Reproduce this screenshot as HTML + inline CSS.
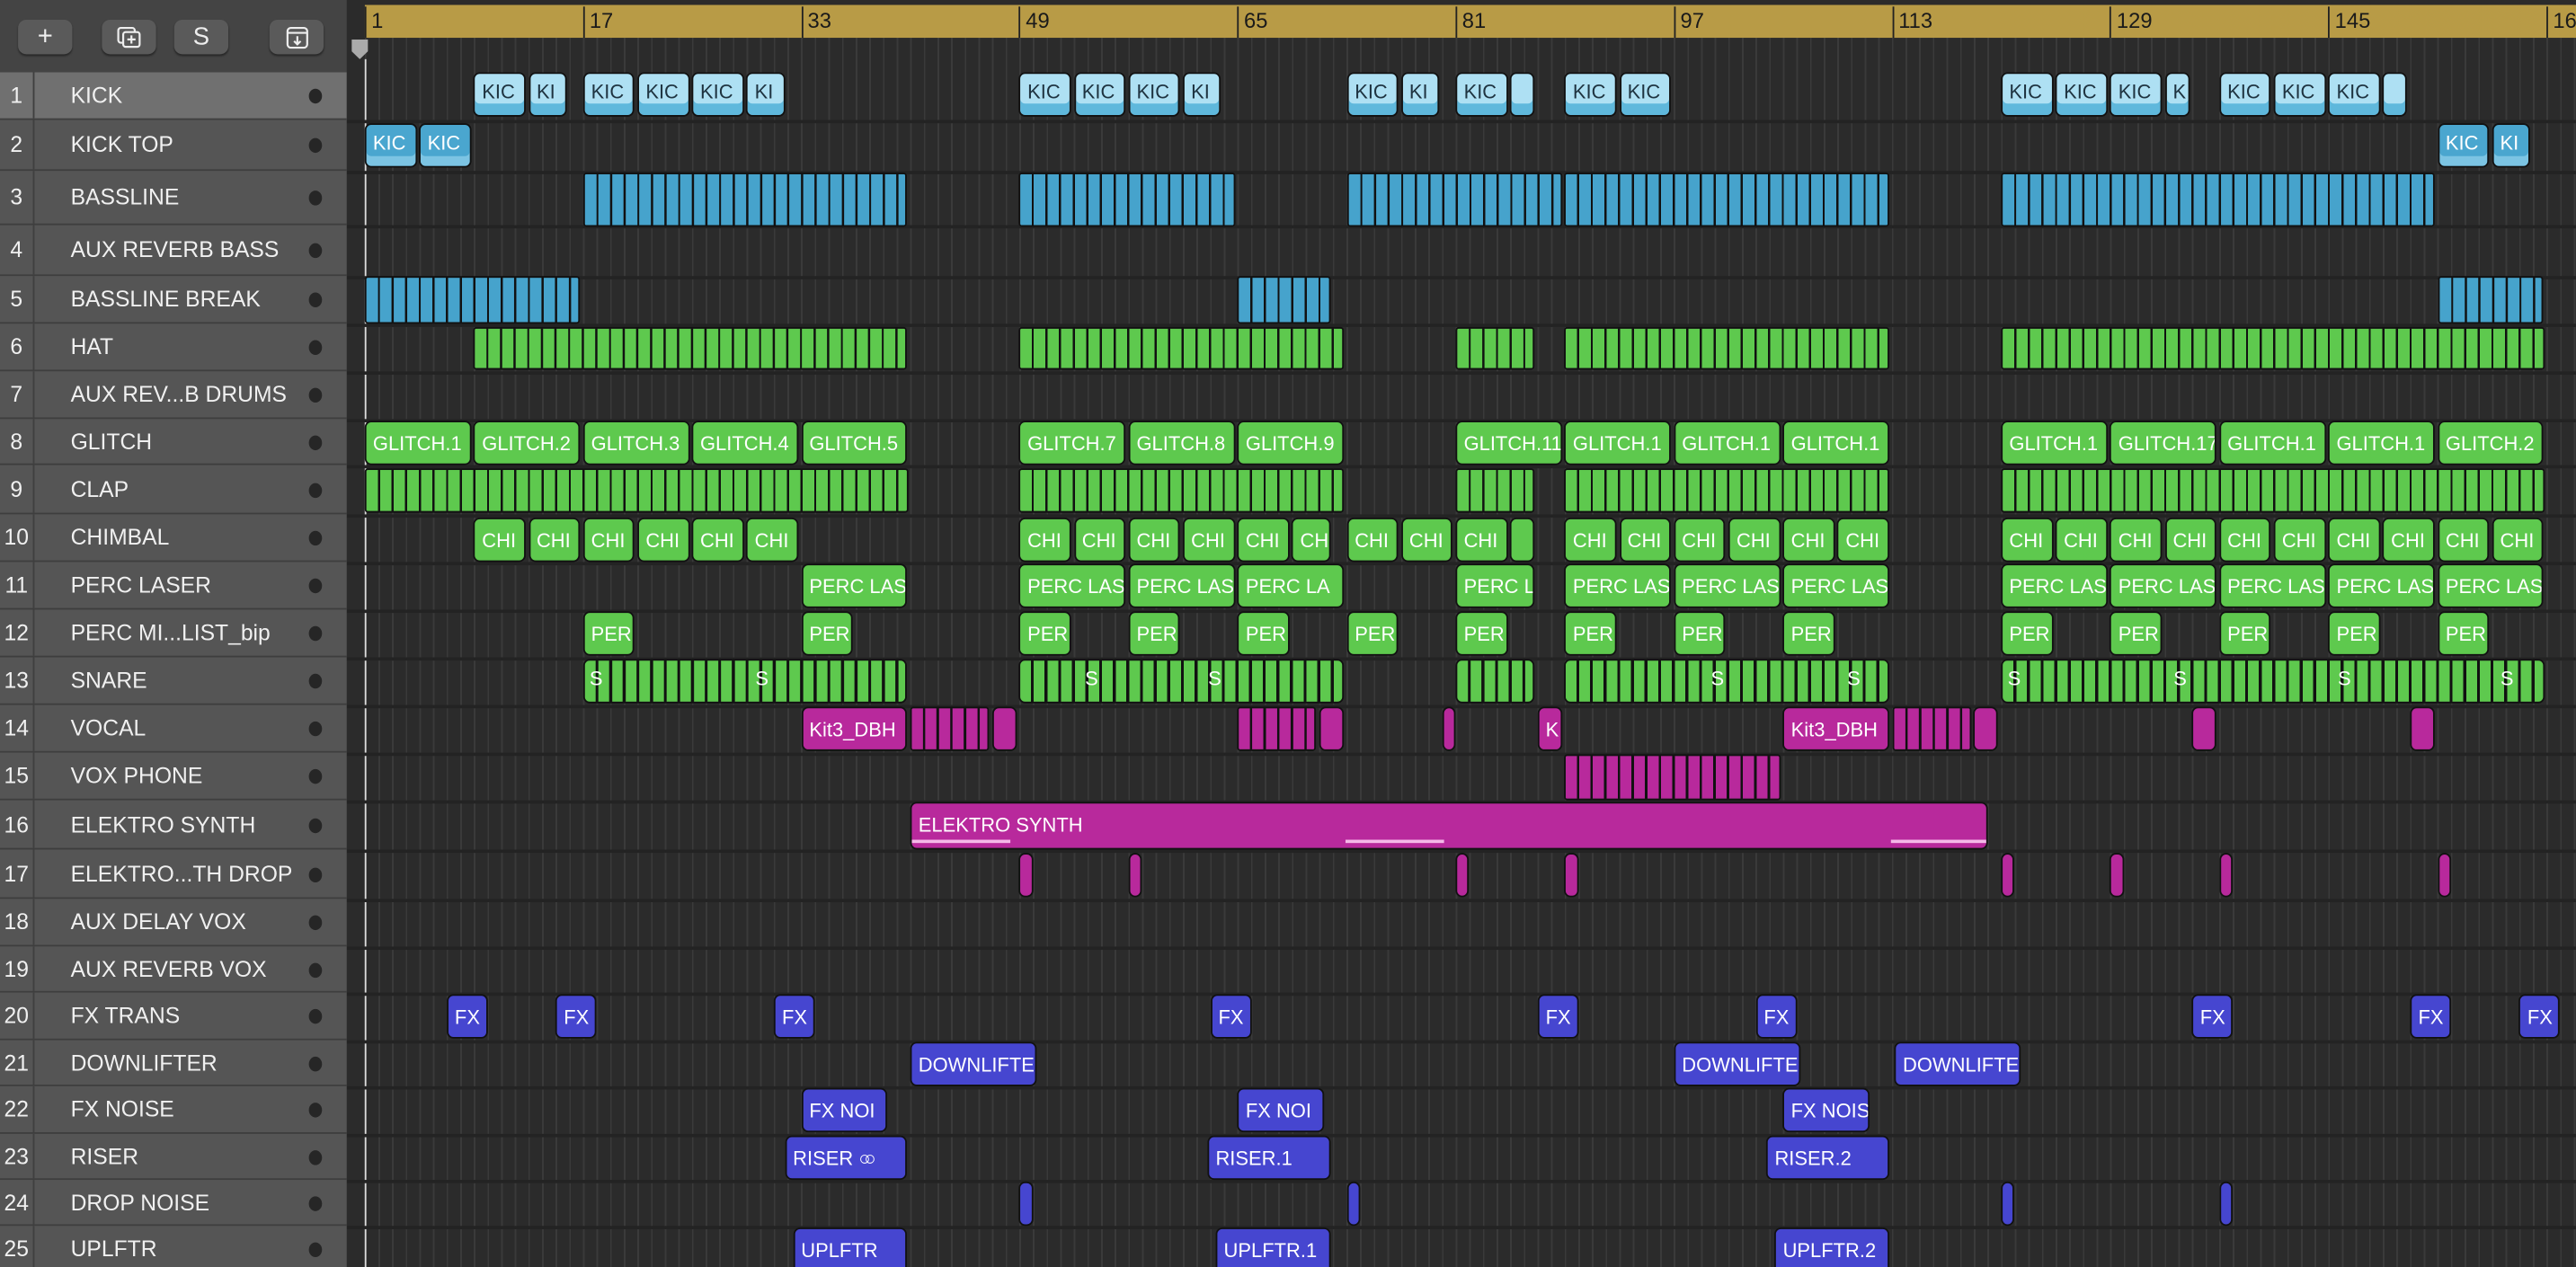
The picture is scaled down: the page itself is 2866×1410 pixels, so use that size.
<!DOCTYPE html>
<html><head><meta charset="utf-8"><style>
html,body{margin:0;padding:0;background:#2b2b2b;overflow:hidden;width:2866px;height:1410px}
#w{position:absolute;left:0;top:0;width:1568px;height:771px;transform:scale(1.82781,1.82879);transform-origin:0 0;font-family:"Liberation Sans",sans-serif;background:#2b2b2b;overflow:hidden}
.lp{position:absolute;left:0;top:0;width:211px;height:771px;background:#4a4a4a}
.hdr{position:absolute;left:0;top:0;width:211px;height:44px;background:#444}
.btn{position:absolute;top:12px;height:21px;width:33px;background:#5a5a5a;border-radius:5px;color:#eee;text-align:center;font-size:16px;line-height:21px;box-shadow:0 1px 1px #2a2a2a}
.tr{position:absolute;left:0;width:211px;background:#555;border-bottom:1px solid #3e3e3e;box-sizing:border-box;color:#f0f0f0;font-size:13.5px}
.tr.sel{background:#707070}
.tr .n{position:absolute;left:0;width:20px;text-align:center;top:50%;transform:translateY(-50%)}
.tr .nm{position:absolute;left:43px;top:50%;transform:translateY(-50%);white-space:nowrap}
.tr .d{position:absolute;left:188px;top:50%;margin-top:-4px;width:8px;height:9px;border-radius:50%;background:#262626}
.tr .sp{position:absolute;left:20px;top:0;bottom:0;width:1px;background:#3f3f3f}
.grid{position:absolute;left:222px;top:22px;width:1346px;height:760px;background:repeating-linear-gradient(90deg,#3a3a3a 0 1px,transparent 1px 8.3px)}
.rl{position:absolute;left:0;width:1568px;height:2px;background:#232323}
.ruler{position:absolute;left:222px;top:3px;width:1346px;height:20px;background:#b89b46}
.ruler span{position:absolute;top:1px;font-size:13px;color:#1a1a1a;padding-left:3px;border-left:1px solid #222;height:19px;line-height:17px}
.rg{position:absolute;left:211px;top:0;width:11px;height:771px;background:#2b2b2b}
.c{position:absolute;left:calc(222px + (var(--b) - 1)*8.3px);width:calc(var(--l)*8.3px - 1.5px);box-sizing:border-box;border:1px solid #111;border-radius:4px;color:#fff;font-size:12px;padding:6px 0 0 4px;white-space:nowrap;overflow:hidden}
.lb{background:#aee0f3;color:#1e3340;box-shadow:inset 0 -7px 0 #5fb8dc;padding-top:4px}
.mb{background:#4aa6cf;box-shadow:inset 0 -6px 0 #7cc4e3;padding-top:4px}
.g{background:#5ec94e}
.m{background:#b8299c}
.p{background:#4646d0}
.s{border-radius:2px;padding:0}
.sb{background:repeating-linear-gradient(90deg,#46a3cc 0 7px,#111 7px 8.3px)}
.sg{background:repeating-linear-gradient(90deg,#5ec94e 0 7px,#111 7px 8.3px)}
.sm{background:repeating-linear-gradient(90deg,#b8299c 0 6.8px,#111 6.8px 8.3px)}
.sn{background:repeating-linear-gradient(90deg,#5ec94e 0 6.5px,#111 6.5px 8.3px);border-radius:4px}
</style></head><body><div id="w">
<div class="grid"></div>
<div class="ruler">
<span style="left:0">1</span><span style="left:132.8px">17</span><span style="left:265.6px">33</span><span style="left:398.4px">49</span><span style="left:531.2px">65</span><span style="left:664px">81</span><span style="left:796.8px">97</span><span style="left:929.6px">113</span><span style="left:1062.4px">129</span><span style="left:1195.2px">145</span><span style="left:1328px">16</span>
</div>
<div class="rg"><div style="position:absolute;left:3px;top:24px;width:10px;height:12px;background:#aaa;clip-path:polygon(0 0,100% 0,100% 60%,50% 100%,0 60%)"></div></div>
<div style="position:absolute;left:222px;top:36px;width:1px;height:740px;background:#ddd"></div>

<div class="rl" style="top:73px"></div><div class="rl" style="top:104px"></div><div class="rl" style="top:137px"></div><div class="rl" style="top:168px"></div><div class="rl" style="top:197px"></div><div class="rl" style="top:226px"></div><div class="rl" style="top:255px"></div><div class="rl" style="top:283px"></div><div class="rl" style="top:313px"></div><div class="rl" style="top:342px"></div><div class="rl" style="top:371px"></div><div class="rl" style="top:400px"></div><div class="rl" style="top:429px"></div><div class="rl" style="top:458px"></div><div class="rl" style="top:487px"></div><div class="rl" style="top:517px"></div><div class="rl" style="top:547px"></div><div class="rl" style="top:576px"></div><div class="rl" style="top:604px"></div><div class="rl" style="top:633px"></div><div class="rl" style="top:661px"></div><div class="rl" style="top:690px"></div><div class="rl" style="top:718px"></div><div class="rl" style="top:746px"></div>

<div class="lp">
<div class="hdr">
<div class="btn" style="left:11px">+</div>
<div class="btn" style="left:62px"><svg width="16" height="14" viewBox="0 0 16 14" style="margin-top:4px"><rect x="1" y="1" width="10" height="9" rx="1.5" fill="none" stroke="#eee" stroke-width="1.2"/><rect x="4" y="3.5" width="10" height="9" rx="1.5" fill="#5a5a5a" stroke="#eee" stroke-width="1.2"/><path d="M9 5.5v5M6.5 8h5" stroke="#eee" stroke-width="1.2"/></svg></div>
<div class="btn" style="left:106px;font-size:15px">S</div>
<div class="btn" style="left:164px"><svg width="14" height="14" viewBox="0 0 14 14" style="margin-top:4px"><rect x="1" y="1" width="12" height="12" rx="2" fill="none" stroke="#eee" stroke-width="1.2"/><path d="M1 4h12M7 6v5M5 9l2 2 2-2" fill="none" stroke="#eee" stroke-width="1.2"/></svg></div>
</div>
<div class="tr sel" style="top:44px;height:29px"><div class="sp"></div><div class="n">1</div><div class="nm">KICK</div><div class="d"></div></div>
<div class="tr" style="top:73px;height:31px"><div class="sp"></div><div class="n">2</div><div class="nm">KICK TOP</div><div class="d"></div></div>
<div class="tr" style="top:104px;height:33px"><div class="sp"></div><div class="n">3</div><div class="nm">BASSLINE</div><div class="d"></div></div>
<div class="tr" style="top:137px;height:31px"><div class="sp"></div><div class="n">4</div><div class="nm">AUX REVERB BASS</div><div class="d"></div></div>
<div class="tr" style="top:168px;height:29px"><div class="sp"></div><div class="n">5</div><div class="nm">BASSLINE BREAK</div><div class="d"></div></div>
<div class="tr" style="top:197px;height:29px"><div class="sp"></div><div class="n">6</div><div class="nm">HAT</div><div class="d"></div></div>
<div class="tr" style="top:226px;height:29px"><div class="sp"></div><div class="n">7</div><div class="nm">AUX REV...B DRUMS</div><div class="d"></div></div>
<div class="tr" style="top:255px;height:28px"><div class="sp"></div><div class="n">8</div><div class="nm">GLITCH</div><div class="d"></div></div>
<div class="tr" style="top:283px;height:30px"><div class="sp"></div><div class="n">9</div><div class="nm">CLAP</div><div class="d"></div></div>
<div class="tr" style="top:313px;height:29px"><div class="sp"></div><div class="n">10</div><div class="nm">CHIMBAL</div><div class="d"></div></div>
<div class="tr" style="top:342px;height:29px"><div class="sp"></div><div class="n">11</div><div class="nm">PERC LASER</div><div class="d"></div></div>
<div class="tr" style="top:371px;height:29px"><div class="sp"></div><div class="n">12</div><div class="nm">PERC MI...LIST_bip</div><div class="d"></div></div>
<div class="tr" style="top:400px;height:29px"><div class="sp"></div><div class="n">13</div><div class="nm">SNARE</div><div class="d"></div></div>
<div class="tr" style="top:429px;height:29px"><div class="sp"></div><div class="n">14</div><div class="nm">VOCAL</div><div class="d"></div></div>
<div class="tr" style="top:458px;height:29px"><div class="sp"></div><div class="n">15</div><div class="nm">VOX PHONE</div><div class="d"></div></div>
<div class="tr" style="top:487px;height:30px"><div class="sp"></div><div class="n">16</div><div class="nm">ELEKTRO SYNTH</div><div class="d"></div></div>
<div class="tr" style="top:517px;height:30px"><div class="sp"></div><div class="n">17</div><div class="nm">ELEKTRO...TH DROP</div><div class="d"></div></div>
<div class="tr" style="top:547px;height:29px"><div class="sp"></div><div class="n">18</div><div class="nm">AUX DELAY VOX</div><div class="d"></div></div>
<div class="tr" style="top:576px;height:28px"><div class="sp"></div><div class="n">19</div><div class="nm">AUX REVERB VOX</div><div class="d"></div></div>
<div class="tr" style="top:604px;height:29px"><div class="sp"></div><div class="n">20</div><div class="nm">FX TRANS</div><div class="d"></div></div>
<div class="tr" style="top:633px;height:28px"><div class="sp"></div><div class="n">21</div><div class="nm">DOWNLIFTER</div><div class="d"></div></div>
<div class="tr" style="top:661px;height:29px"><div class="sp"></div><div class="n">22</div><div class="nm">FX NOISE</div><div class="d"></div></div>
<div class="tr" style="top:690px;height:28px"><div class="sp"></div><div class="n">23</div><div class="nm">RISER</div><div class="d"></div></div>
<div class="tr" style="top:718px;height:28px"><div class="sp"></div><div class="n">24</div><div class="nm">DROP NOISE</div><div class="d"></div></div>
<div class="tr" style="top:746px;height:28px"><div class="sp"></div><div class="n">25</div><div class="nm">UPLFTR</div><div class="d"></div></div>
</div>

<div style="position:absolute;top:44px;height:27px;left:0;width:1568px">
<div class="c lb" style="--b:9;--l:4;top:0;height:27px">KIC</div><div class="c lb" style="--b:13;--l:3;top:0;height:27px">KI</div>
<div class="c lb" style="--b:17;--l:4;top:0;height:27px">KIC</div><div class="c lb" style="--b:21;--l:4;top:0;height:27px">KIC</div><div class="c lb" style="--b:25;--l:4;top:0;height:27px">KIC</div><div class="c lb" style="--b:29;--l:3;top:0;height:27px">KI</div>
<div class="c lb" style="--b:49;--l:4;top:0;height:27px">KIC</div><div class="c lb" style="--b:53;--l:4;top:0;height:27px">KIC</div><div class="c lb" style="--b:57;--l:4;top:0;height:27px">KIC</div><div class="c lb" style="--b:61;--l:3;top:0;height:27px">KI</div>
<div class="c lb" style="--b:73;--l:4;top:0;height:27px">KIC</div><div class="c lb" style="--b:77;--l:3;top:0;height:27px">KI</div>
<div class="c lb" style="--b:81;--l:4;top:0;height:27px">KIC</div><div class="c lb" style="--b:85;--l:2;top:0;height:27px"></div>
<div class="c lb" style="--b:89;--l:4;top:0;height:27px">KIC</div><div class="c lb" style="--b:93;--l:4;top:0;height:27px">KIC</div>
<div class="c lb" style="--b:121;--l:4;top:0;height:27px">KIC</div><div class="c lb" style="--b:125;--l:4;top:0;height:27px">KIC</div><div class="c lb" style="--b:129;--l:4;top:0;height:27px">KIC</div><div class="c lb" style="--b:133;--l:2;top:0;height:27px">K</div>
<div class="c lb" style="--b:137;--l:4;top:0;height:27px">KIC</div><div class="c lb" style="--b:141;--l:4;top:0;height:27px">KIC</div><div class="c lb" style="--b:145;--l:4;top:0;height:27px">KIC</div><div class="c lb" style="--b:149;--l:2;top:0;height:27px"></div>
</div>
<div style="position:absolute;top:75px;left:0">
<div class="c mb" style="--b:1;--l:4;top:0;height:27px">KIC</div><div class="c mb" style="--b:5;--l:4;top:0;height:27px">KIC</div>
<div class="c mb" style="--b:153;--l:4;top:0;height:27px">KIC</div><div class="c mb" style="--b:157;--l:3;top:0;height:27px">KI</div>
</div>
<div style="position:absolute;top:105px;left:0">
<div class="c s sb" style="--b:17;--l:24;top:0;height:33px"></div>
<div class="c s sb" style="--b:49;--l:16;top:0;height:33px"></div>
<div class="c s sb" style="--b:73;--l:16;top:0;height:33px"></div>
<div class="c s sb" style="--b:89;--l:24;top:0;height:33px"></div>
<div class="c s sb" style="--b:121;--l:32;top:0;height:33px"></div>
</div>
<div style="position:absolute;top:168px;left:0">
<div class="c s sb" style="--b:1;--l:16;top:0;height:29px"></div>
<div class="c s sb" style="--b:65;--l:7;top:0;height:29px"></div>
<div class="c s sb" style="--b:153;--l:8;top:0;height:29px"></div>
</div>
<div style="position:absolute;top:199px;left:0">
<div class="c s sg" style="--b:9;--l:32;top:0;height:26px"></div>
<div class="c s sg" style="--b:49;--l:24;top:0;height:26px"></div>
<div class="c s sg" style="--b:81;--l:6;top:0;height:26px"></div>
<div class="c s sg" style="--b:89;--l:24;top:0;height:26px"></div>
<div class="c s sg" style="--b:121;--l:40;top:0;height:26px"></div>
</div>
<div style="position:absolute;top:256px;left:0">
<div class="c g" style="--b:1;--l:8;top:0;height:27px">GLITCH.1</div><div class="c g" style="--b:9;--l:8;top:0;height:27px">GLITCH.2</div><div class="c g" style="--b:17;--l:8;top:0;height:27px">GLITCH.3</div><div class="c g" style="--b:25;--l:8;top:0;height:27px">GLITCH.4</div><div class="c g" style="--b:33;--l:8;top:0;height:27px">GLITCH.5</div>
<div class="c g" style="--b:49;--l:8;top:0;height:27px">GLITCH.7</div><div class="c g" style="--b:57;--l:8;top:0;height:27px">GLITCH.8</div><div class="c g" style="--b:65;--l:8;top:0;height:27px">GLITCH.9</div>
<div class="c g" style="--b:81;--l:8;top:0;height:27px">GLITCH.11</div><div class="c g" style="--b:89;--l:8;top:0;height:27px">GLITCH.1</div><div class="c g" style="--b:97;--l:8;top:0;height:27px">GLITCH.1</div><div class="c g" style="--b:105;--l:8;top:0;height:27px">GLITCH.1</div>
<div class="c g" style="--b:121;--l:8;top:0;height:27px">GLITCH.1</div><div class="c g" style="--b:129;--l:8;top:0;height:27px">GLITCH.17</div><div class="c g" style="--b:137;--l:8;top:0;height:27px">GLITCH.1</div><div class="c g" style="--b:145;--l:8;top:0;height:27px">GLITCH.1</div><div class="c g" style="--b:153;--l:8;top:0;height:27px">GLITCH.2</div>
</div>
<div style="position:absolute;top:285px;left:0">
<div class="c s sg" style="--b:1;--l:40;top:0;height:27px"></div>
<div class="c s sg" style="--b:49;--l:24;top:0;height:27px"></div>
<div class="c s sg" style="--b:81;--l:6;top:0;height:27px"></div>
<div class="c s sg" style="--b:89;--l:24;top:0;height:27px"></div>
<div class="c s sg" style="--b:121;--l:40;top:0;height:27px"></div>
</div>
<div style="position:absolute;top:315px;left:0">
<div class="c g" style="--b:9;--l:4;top:0;height:27px">CHI</div><div class="c g" style="--b:13;--l:4;top:0;height:27px">CHI</div><div class="c g" style="--b:17;--l:4;top:0;height:27px">CHI</div><div class="c g" style="--b:21;--l:4;top:0;height:27px">CHI</div><div class="c g" style="--b:25;--l:4;top:0;height:27px">CHI</div><div class="c g" style="--b:29;--l:4;top:0;height:27px">CHI</div>
<div class="c g" style="--b:49;--l:4;top:0;height:27px">CHI</div><div class="c g" style="--b:53;--l:4;top:0;height:27px">CHI</div><div class="c g" style="--b:57;--l:4;top:0;height:27px">CHI</div><div class="c g" style="--b:61;--l:4;top:0;height:27px">CHI</div><div class="c g" style="--b:65;--l:4;top:0;height:27px">CHI</div><div class="c g" style="--b:69;--l:3;top:0;height:27px">CH</div>
<div class="c g" style="--b:73;--l:4;top:0;height:27px">CHI</div><div class="c g" style="--b:77;--l:4;top:0;height:27px">CHI</div><div class="c g" style="--b:81;--l:4;top:0;height:27px">CHI</div><div class="c g" style="--b:85;--l:2;top:0;height:27px"></div>
<div class="c g" style="--b:89;--l:4;top:0;height:27px">CHI</div><div class="c g" style="--b:93;--l:4;top:0;height:27px">CHI</div><div class="c g" style="--b:97;--l:4;top:0;height:27px">CHI</div><div class="c g" style="--b:101;--l:4;top:0;height:27px">CHI</div><div class="c g" style="--b:105;--l:4;top:0;height:27px">CHI</div><div class="c g" style="--b:109;--l:4;top:0;height:27px">CHI</div>
<div class="c g" style="--b:121;--l:4;top:0;height:27px">CHI</div><div class="c g" style="--b:125;--l:4;top:0;height:27px">CHI</div><div class="c g" style="--b:129;--l:4;top:0;height:27px">CHI</div><div class="c g" style="--b:133;--l:4;top:0;height:27px">CHI</div><div class="c g" style="--b:137;--l:4;top:0;height:27px">CHI</div><div class="c g" style="--b:141;--l:4;top:0;height:27px">CHI</div><div class="c g" style="--b:145;--l:4;top:0;height:27px">CHI</div><div class="c g" style="--b:149;--l:4;top:0;height:27px">CHI</div><div class="c g" style="--b:153;--l:4;top:0;height:27px">CHI</div><div class="c g" style="--b:157;--l:4;top:0;height:27px">CHI</div>
</div>
<div style="position:absolute;top:343px;left:0">
<div class="c g" style="--b:33;--l:8;top:0;height:27px">PERC LAS</div>
<div class="c g" style="--b:49;--l:8;top:0;height:27px">PERC LAS</div><div class="c g" style="--b:57;--l:8;top:0;height:27px">PERC LAS</div><div class="c g" style="--b:65;--l:8;top:0;height:27px">PERC LA</div>
<div class="c g" style="--b:81;--l:6;top:0;height:27px">PERC L</div>
<div class="c g" style="--b:89;--l:8;top:0;height:27px">PERC LAS</div><div class="c g" style="--b:97;--l:8;top:0;height:27px">PERC LAS</div><div class="c g" style="--b:105;--l:8;top:0;height:27px">PERC LAS</div>
<div class="c g" style="--b:121;--l:8;top:0;height:27px">PERC LAS</div><div class="c g" style="--b:129;--l:8;top:0;height:27px">PERC LAS</div><div class="c g" style="--b:137;--l:8;top:0;height:27px">PERC LAS</div><div class="c g" style="--b:145;--l:8;top:0;height:27px">PERC LAS</div><div class="c g" style="--b:153;--l:8;top:0;height:27px">PERC LAS</div>
</div>
<div style="position:absolute;top:372px;left:0">
<div class="c g" style="--b:17;--l:4;top:0;height:27px">PER</div><div class="c g" style="--b:33;--l:4;top:0;height:27px">PER</div><div class="c g" style="--b:49;--l:4;top:0;height:27px">PER</div><div class="c g" style="--b:57;--l:4;top:0;height:27px">PER</div><div class="c g" style="--b:65;--l:4;top:0;height:27px">PER</div><div class="c g" style="--b:73;--l:4;top:0;height:27px">PER</div><div class="c g" style="--b:81;--l:4;top:0;height:27px">PER</div><div class="c g" style="--b:89;--l:4;top:0;height:27px">PER</div><div class="c g" style="--b:97;--l:4;top:0;height:27px">PER</div><div class="c g" style="--b:105;--l:4;top:0;height:27px">PER</div><div class="c g" style="--b:121;--l:4;top:0;height:27px">PER</div><div class="c g" style="--b:129;--l:4;top:0;height:27px">PER</div><div class="c g" style="--b:137;--l:4;top:0;height:27px">PER</div><div class="c g" style="--b:145;--l:4;top:0;height:27px">PER</div><div class="c g" style="--b:153;--l:4;top:0;height:27px">PER</div>
</div>
<div style="position:absolute;top:401px;left:0">
<div class="c sn" style="--b:17;--l:24;top:0;height:27px;padding:4px 0 0 3px">S<span style="position:absolute;left:104px;top:4px">S</span></div>
<div class="c sn" style="--b:49;--l:24;top:0;height:27px;padding:4px 0 0 0"><span style="position:absolute;left:39px;top:4px">S</span><span style="position:absolute;left:114px;top:4px">S</span></div>
<div class="c sn" style="--b:81;--l:6;top:0;height:27px"></div>
<div class="c sn" style="--b:89;--l:24;top:0;height:27px"><span style="position:absolute;left:88px;top:4px">S</span><span style="position:absolute;left:171px;top:4px">S</span></div>
<div class="c sn" style="--b:121;--l:40;top:0;height:27px;padding:4px 0 0 3px">S<span style="position:absolute;left:104px;top:4px">S</span><span style="position:absolute;left:204px;top:4px">S</span><span style="position:absolute;left:303px;top:4px">S</span></div>
</div>
<div style="position:absolute;top:430px;left:0">
<div class="c m" style="--b:33;--l:8;top:0;height:27px">Kit3_DBH</div><div class="c s sm" style="--b:41;--l:6;top:0;height:27px"></div><div class="c m" style="--b:47;--l:2;top:0;height:27px"></div>
<div class="c s sm" style="--b:65;--l:6;top:0;height:27px"></div><div class="c m" style="--b:71;--l:2;top:0;height:27px"></div>
<div class="c m" style="--b:80;--l:1.2;top:0;height:27px"></div>
<div class="c m" style="--b:87;--l:2;top:0;height:27px">K</div>
<div class="c m" style="--b:105;--l:8;top:0;height:27px">Kit3_DBH</div><div class="c s sm" style="--b:113;--l:6;top:0;height:27px"></div><div class="c m" style="--b:119;--l:2;top:0;height:27px"></div>
<div class="c m" style="--b:135;--l:2;top:0;height:27px"></div><div class="c m" style="--b:151;--l:2;top:0;height:27px"></div>
</div>
<div style="position:absolute;top:459px;left:0"><div class="c s sm" style="--b:89;--l:16;top:0;height:28px"></div></div>
<div style="position:absolute;top:488px;left:0"><div class="c m" style="--b:41;--l:79.2;top:0;height:29px">ELEKTRO SYNTH
<div style="position:absolute;left:0;top:22px;width:60px;height:2px;background:#f4b8e8"></div><div style="position:absolute;left:264px;top:22px;width:60px;height:2px;background:#f4b8e8"></div><div style="position:absolute;left:596px;top:22px;width:60px;height:2px;background:#f4b8e8"></div></div></div>
<div style="position:absolute;top:519px;left:0">
<div class="c m" style="--b:49;--l:1.2;top:0;height:27px"></div><div class="c m" style="--b:57;--l:1.2;top:0;height:27px"></div><div class="c m" style="--b:81;--l:1.2;top:0;height:27px"></div><div class="c m" style="--b:89;--l:1.2;top:0;height:27px"></div><div class="c m" style="--b:121;--l:1.2;top:0;height:27px"></div><div class="c m" style="--b:129;--l:1.2;top:0;height:27px"></div><div class="c m" style="--b:137;--l:1.2;top:0;height:27px"></div><div class="c m" style="--b:153;--l:1.2;top:0;height:27px"></div>
</div>
<div style="position:absolute;top:605px;left:0">
<div class="c p" style="--b:7;--l:3.2;top:0;height:27px">FX</div><div class="c p" style="--b:15;--l:3.2;top:0;height:27px">FX</div><div class="c p" style="--b:31;--l:3.2;top:0;height:27px">FX</div><div class="c p" style="--b:63;--l:3.2;top:0;height:27px">FX</div><div class="c p" style="--b:87;--l:3.2;top:0;height:27px">FX</div><div class="c p" style="--b:103;--l:3.2;top:0;height:27px">FX</div><div class="c p" style="--b:135;--l:3.2;top:0;height:27px">FX</div><div class="c p" style="--b:151;--l:3.2;top:0;height:27px">FX</div><div class="c p" style="--b:159;--l:3.2;top:0;height:27px">FX</div>
</div>
<div style="position:absolute;top:634px;left:0">
<div class="c p" style="--b:41;--l:9.5;top:0;height:27px">DOWNLIFTE</div><div class="c p" style="--b:97;--l:9.5;top:0;height:27px">DOWNLIFTE</div><div class="c p" style="--b:113.2;--l:9.4;top:0;height:27px">DOWNLIFTE</div>
</div>
<div style="position:absolute;top:662px;left:0">
<div class="c p" style="--b:33;--l:6.5;top:0;height:27px">FX NOI</div><div class="c p" style="--b:65;--l:6.5;top:0;height:27px">FX NOI</div><div class="c p" style="--b:105;--l:6.5;top:0;height:27px">FX NOIS</div>
</div>
<div style="position:absolute;top:691px;left:0">
<div class="c p" style="--b:31.8;--l:9.2;top:0;height:27px">RISER <span style="letter-spacing:-4px">○○</span></div><div class="c p" style="--b:62.8;--l:9.2;top:0;height:27px">RISER.1</div><div class="c p" style="--b:103.8;--l:9.2;top:0;height:27px">RISER.2</div>
</div>
<div style="position:absolute;top:719px;left:0">
<div class="c p" style="--b:49;--l:1.2;top:0;height:27px"></div><div class="c p" style="--b:73;--l:1.2;top:0;height:27px"></div><div class="c p" style="--b:121;--l:1.2;top:0;height:27px"></div><div class="c p" style="--b:137;--l:1.2;top:0;height:27px"></div>
</div>
<div style="position:absolute;top:747px;left:0">
<div class="c p" style="--b:32.4;--l:8.6;top:0;height:30px">UPLFTR</div><div class="c p" style="--b:63.4;--l:8.6;top:0;height:30px">UPLFTR.1</div><div class="c p" style="--b:104.4;--l:8.6;top:0;height:30px">UPLFTR.2</div>
</div>
</div></body></html>
